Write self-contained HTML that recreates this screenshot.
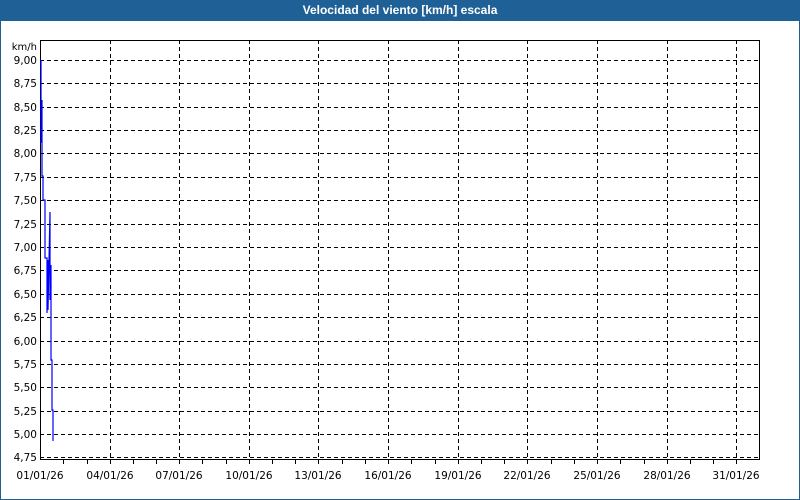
<!DOCTYPE html>
<html><head><style>
body{margin:0;width:800px;height:500px;overflow:hidden;font-family:"Liberation Sans",sans-serif;background:#fff}
.frame{position:absolute;left:0;top:0;width:798px;height:498px;border:1px solid #1f6196}
.title{position:absolute;left:0;top:0;width:800px;height:21px;background:#1f6196;color:#fff;font:bold 12px "Liberation Sans",sans-serif;text-align:center;line-height:21px}
</style></head><body>
<div class="frame"></div>
<div class="title">Velocidad del viento [km/h] escala</div>
<svg width="800" height="500" style="position:absolute;left:0;top:0" font-family="DejaVu Sans, sans-serif" font-size="10.5">
<g stroke="#000" stroke-dasharray="4,3" stroke-width="1">
<line x1="40" x2="760" y1="60.5" y2="60.5"/><line x1="40" x2="760" y1="83.5" y2="83.5"/><line x1="40" x2="760" y1="107.5" y2="107.5"/><line x1="40" x2="760" y1="130.5" y2="130.5"/><line x1="40" x2="760" y1="153.5" y2="153.5"/><line x1="40" x2="760" y1="177.5" y2="177.5"/><line x1="40" x2="760" y1="200.5" y2="200.5"/><line x1="40" x2="760" y1="224.5" y2="224.5"/><line x1="40" x2="760" y1="247.5" y2="247.5"/><line x1="40" x2="760" y1="270.5" y2="270.5"/><line x1="40" x2="760" y1="294.5" y2="294.5"/><line x1="40" x2="760" y1="317.5" y2="317.5"/><line x1="40" x2="760" y1="341.5" y2="341.5"/><line x1="40" x2="760" y1="364.5" y2="364.5"/><line x1="40" x2="760" y1="387.5" y2="387.5"/><line x1="40" x2="760" y1="411.5" y2="411.5"/><line x1="40" x2="760" y1="434.5" y2="434.5"/><line x1="40" x2="760" y1="457.5" y2="457.5"/>
<line y1="40" y2="460" x1="110.5" x2="110.5"/><line y1="40" y2="460" x1="179.5" x2="179.5"/><line y1="40" y2="460" x1="249.5" x2="249.5"/><line y1="40" y2="460" x1="318.5" x2="318.5"/><line y1="40" y2="460" x1="388.5" x2="388.5"/><line y1="40" y2="460" x1="458.5" x2="458.5"/><line y1="40" y2="460" x1="527.5" x2="527.5"/><line y1="40" y2="460" x1="597.5" x2="597.5"/><line y1="40" y2="460" x1="667.5" x2="667.5"/><line y1="40" y2="460" x1="736.5" x2="736.5"/>
</g>
<rect x="40.5" y="40.5" width="719" height="419" fill="none" stroke="#000"/>
<g stroke="#000"><line x1="63.5" x2="63.5" y1="460" y2="464"/><line x1="87.5" x2="87.5" y1="460" y2="464"/><line x1="110.5" x2="110.5" y1="460" y2="464"/><line x1="133.5" x2="133.5" y1="460" y2="464"/><line x1="156.5" x2="156.5" y1="460" y2="464"/><line x1="179.5" x2="179.5" y1="460" y2="464"/><line x1="202.5" x2="202.5" y1="460" y2="464"/><line x1="226.5" x2="226.5" y1="460" y2="464"/><line x1="249.5" x2="249.5" y1="460" y2="464"/><line x1="272.5" x2="272.5" y1="460" y2="464"/><line x1="295.5" x2="295.5" y1="460" y2="464"/><line x1="318.5" x2="318.5" y1="460" y2="464"/><line x1="342.5" x2="342.5" y1="460" y2="464"/><line x1="365.5" x2="365.5" y1="460" y2="464"/><line x1="388.5" x2="388.5" y1="460" y2="464"/><line x1="411.5" x2="411.5" y1="460" y2="464"/><line x1="435.5" x2="435.5" y1="460" y2="464"/><line x1="458.5" x2="458.5" y1="460" y2="464"/><line x1="481.5" x2="481.5" y1="460" y2="464"/><line x1="504.5" x2="504.5" y1="460" y2="464"/><line x1="527.5" x2="527.5" y1="460" y2="464"/><line x1="551.5" x2="551.5" y1="460" y2="464"/><line x1="574.5" x2="574.5" y1="460" y2="464"/><line x1="597.5" x2="597.5" y1="460" y2="464"/><line x1="620.5" x2="620.5" y1="460" y2="464"/><line x1="644.5" x2="644.5" y1="460" y2="464"/><line x1="667.5" x2="667.5" y1="460" y2="464"/><line x1="690.5" x2="690.5" y1="460" y2="464"/><line x1="713.5" x2="713.5" y1="460" y2="464"/><line x1="736.5" x2="736.5" y1="460" y2="464"/></g>
<polyline fill="none" stroke="#00f" stroke-width="1.2" points="41,60 41,143 42,100 42,176 43,176 43,200 45,200 45,258 47,258 47,313 48,260 48,310 50,212 50,300 51,265 51,360 52,360 52,410 53,410 53,441"/>
<g fill="#000" text-anchor="end">
<text x="37" y="50" font-size="10">km/h</text>
<text x="37" y="64">9,00</text><text x="37" y="87">8,75</text><text x="37" y="111">8,50</text><text x="37" y="134">8,25</text><text x="37" y="157">8,00</text><text x="37" y="181">7,75</text><text x="37" y="204">7,50</text><text x="37" y="228">7,25</text><text x="37" y="251">7,00</text><text x="37" y="274">6,75</text><text x="37" y="298">6,50</text><text x="37" y="321">6,25</text><text x="37" y="345">6,00</text><text x="37" y="368">5,75</text><text x="37" y="391">5,50</text><text x="37" y="415">5,25</text><text x="37" y="438">5,00</text><text x="37" y="461">4,75</text>
</g>
<g fill="#000" text-anchor="middle">
<text x="40" y="479">01/01/26</text><text x="110" y="479">04/01/26</text><text x="179" y="479">07/01/26</text><text x="249" y="479">10/01/26</text><text x="318" y="479">13/01/26</text><text x="388" y="479">16/01/26</text><text x="458" y="479">19/01/26</text><text x="527" y="479">22/01/26</text><text x="597" y="479">25/01/26</text><text x="667" y="479">28/01/26</text><text x="736" y="479">31/01/26</text>
</g>
</svg>
</body></html>
